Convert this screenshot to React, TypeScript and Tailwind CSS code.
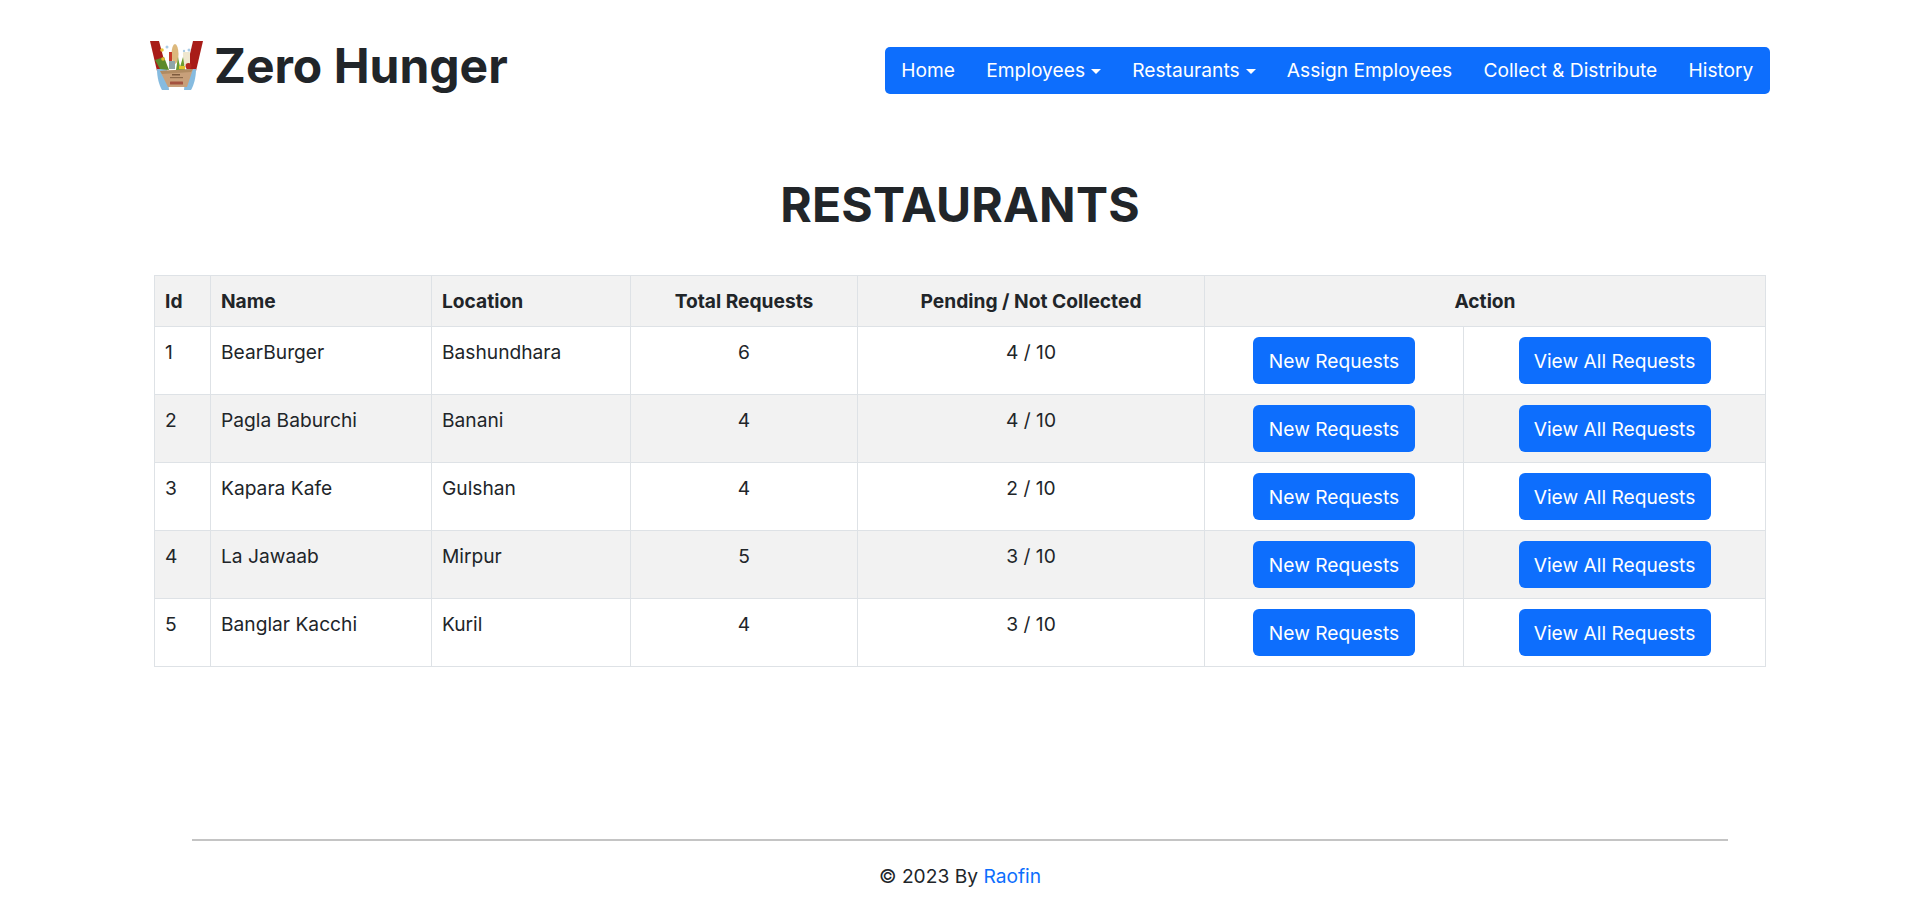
const rows = [
  { id: 1, name: 'BearBurger', location: 'Bashundhara', total: 6, pending: '4 / 10' },
  { id: 2, name: 'Pagla Baburchi', location: 'Banani', total: 4, pending: '4 / 10' },
  { id: 3, name: 'Kapara Kafe', location: 'Gulshan', total: 4, pending: '2 / 10' },
  { id: 4, name: 'La Jawaab', location: 'Mirpur', total: 5, pending: '3 / 10' },
  { id: 5, name: 'Banglar Kacchi', location: 'Kuril', total: 4, pending: '3 / 10' },
];

function Logo() {
  return (
    <svg viewBox="0 0 54 50" className="w-[54px] h-[50px] shrink-0">
      {/* straps */}
      <path d="M0 0H9L17 30H7Z" fill="#a81c18" />
      <path d="M43 0H53L46 30H36Z" fill="#a81c18" />
      <path d="M7 28L17 28L19 49H12C9 44 7 36 7 28Z" fill="#86bbdf" />
      <path d="M46 28L36 28L34 49H41C44 44 46 36 46 28Z" fill="#86bbdf" />
      {/* groceries */}
      <ellipse cx="25" cy="13" rx="3.5" ry="10" fill="#dcb87c" />
      <rect x="19" y="11" width="3" height="12" fill="#c53a2a" />
      <circle cx="12" cy="9" r="1.8" fill="#e8c53a" />
      <circle cx="17" cy="6" r="1.5" fill="#a9cbe4" />
      <circle cx="39" cy="9" r="1.5" fill="#a9cbe4" />
      <circle cx="34" cy="10" r="1.2" fill="#a9cbe4" />
      <rect x="33" y="11" width="7" height="13" rx="1" fill="#efe7cf" />
      <path d="M5 19L14 16L19 29L10 28Z" fill="#5c8a2c" />
      <path d="M26 29L28 16L30 26L33 16L35 29Z" fill="#6d9c2e" />
      <circle cx="38.5" cy="25" r="3" fill="#b5281f" />
      <circle cx="13" cy="18" r="1.8" fill="#e3b72c" />
      <rect x="19" y="20" width="6" height="8" fill="#8fa5a8" />
      <rect x="29" y="25" width="6" height="3" fill="#e3c32c" />
      {/* box */}
      <path d="M10 30L43 28L37 46H18Z" fill="#c8a07a" />
      <path d="M10 30L43 28L41 31L12 33Z" fill="#b08b62" />
      <rect x="22" y="33" width="8" height="1.5" fill="#7d5a3c" />
      <rect x="20" y="36" width="13" height="1.2" fill="#8d6a4a" />
      <rect x="20" y="40.5" width="13" height="3" rx="0.5" fill="#a3523f" />
    </svg>
  );
}

function Caret() {
  return <span className="ml-[6px] inline-block align-[3px] border-x-[5.8px] border-t-[5.8px] border-x-transparent border-t-white" />;
}

const navItems = [
  { label: 'Home' },
  { label: 'Employees', caret: true },
  { label: 'Restaurants', caret: true },
  { label: 'Assign Employees' },
  { label: 'Collect & Distribute' },
  { label: 'History' },
];

export default function App() {
  return (
    <div className="min-h-[923px] bg-white text-[#212529] font-['Inter',sans-serif] text-[19.2px] leading-[28.8px] px-[150px]">
      {/* Header */}
      <header className="flex items-start justify-between pt-[44px]">
        <div className="flex items-center gap-[10px] -mt-[3px]">
          <Logo />
          <span className="text-[48px] leading-[44px] font-bold">Zero Hunger</span>
        </div>
        <nav className="flex items-center h-[47px] mt-[3px] bg-[#0d6efd] rounded-[5px] text-white px-[1px]">
          {navItems.map((item) => (
            <a key={item.label} className="px-[15.6px] whitespace-nowrap">
              {item.label}
              {item.caret && <Caret />}
            </a>
          ))}
        </nav>
      </header>

      <main>
        <h1 className="text-center text-[48px] leading-[58px] font-bold mt-[82px] mb-[41px] tracking-[0.2px]">RESTAURANTS</h1>

        <table className="table-fixed border-collapse w-[1611px] mx-[4px] border border-[#dee2e6]">
          <colgroup>
            <col className="w-[56px]" />
            <col className="w-[221px]" />
            <col className="w-[199px]" />
            <col className="w-[227px]" />
            <col className="w-[347px]" />
            <col className="w-[259px]" />
            <col className="w-[302px]" />
          </colgroup>
          <thead>
            <tr className="bg-[#f2f2f2] font-bold">
              <th className="border border-[#dee2e6] px-[10px] py-[10.5px] text-left">Id</th>
              <th className="border border-[#dee2e6] px-[10px] py-[10.5px] text-left">Name</th>
              <th className="border border-[#dee2e6] px-[10px] py-[10.5px] text-left">Location</th>
              <th className="border border-[#dee2e6] px-[10px] py-[10.5px] text-center">Total Requests</th>
              <th className="border border-[#dee2e6] px-[10px] py-[10.5px] text-center">Pending / Not Collected</th>
              <th colSpan={2} className="border border-[#dee2e6] px-[10px] py-[10.5px] text-center">Action</th>
            </tr>
          </thead>
          <tbody>
            {rows.map((row) => (
              <tr key={row.id} className="h-[68px] even:bg-[#f2f2f2]">
                <td className="border border-[#dee2e6] px-[10px] pt-[11px] align-top">{row.id}</td>
                <td className="border border-[#dee2e6] px-[10px] pt-[11px] align-top">{row.name}</td>
                <td className="border border-[#dee2e6] px-[10px] pt-[11px] align-top">{row.location}</td>
                <td className="border border-[#dee2e6] px-[10px] pt-[11px] align-top text-center">{row.total}</td>
                <td className="border border-[#dee2e6] px-[10px] pt-[11px] align-top text-center">{row.pending}</td>
                <td className="border border-[#dee2e6] text-center align-middle">
                  <button className="h-[47px] w-[162px] pt-[2px] rounded-[6px] bg-[#0d6efd] text-white">New Requests</button>
                </td>
                <td className="border border-[#dee2e6] text-center align-middle">
                  <button className="h-[47px] w-[192px] pt-[2px] rounded-[6px] bg-[#0d6efd] text-white">View All Requests</button>
                </td>
              </tr>
            ))}
          </tbody>
        </table>
      </main>

      {/* Footer */}
      <footer className="mt-[172px] mx-[42px] pb-[8px] text-center">
        <hr className="border-0 border-t-2 border-[#c4c4c4]" />
        <p className="mt-[21px]">
          © 2023 By <a className="text-[#0d6efd]">Raofin</a>
        </p>
      </footer>
    </div>
  );
}
